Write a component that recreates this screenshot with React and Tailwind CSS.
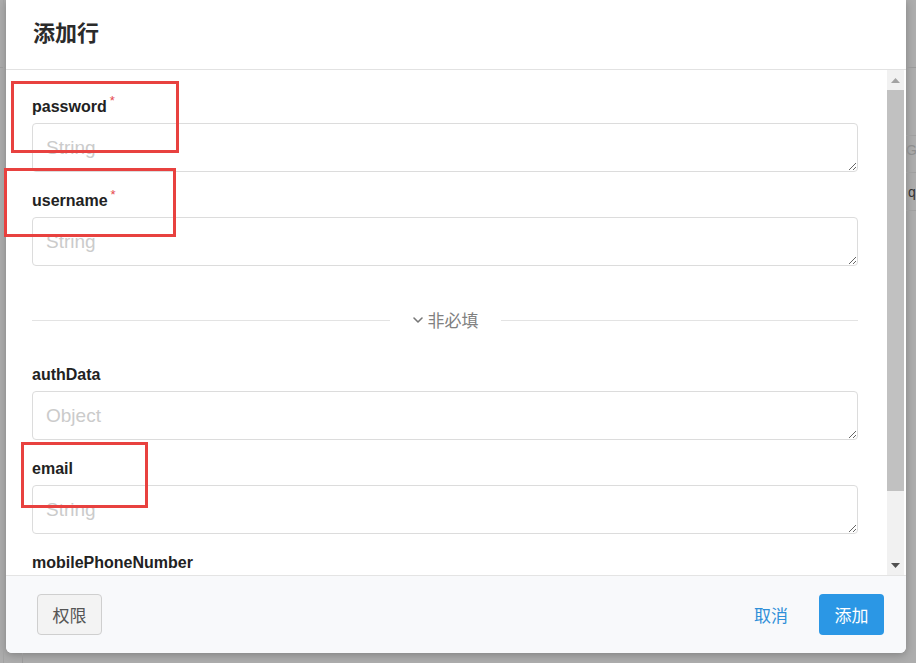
import React from "react";

const latin = { fontFamily: '"Liberation Sans", "Noto Sans CJK SC", Arial, sans-serif' };
const cjk = { fontFamily: '"Noto Sans CJK SC", "Liberation Sans", sans-serif' };

function Field({ label, required, placeholder }) {
  return (
    <div className="mb-[19px]">
      <div className="flex h-[20px] items-center text-[16px] font-bold leading-[20px] text-[#222]" style={latin}>
        <span>{label}</span>
        {required && <span className="relative -top-[6px] ml-[3px] text-[13px] font-normal text-[#e5484d]">*</span>}
      </div>
      <textarea
        placeholder={placeholder}
        className="mt-[6px] block h-[49px] w-full rounded-[4px] border border-[#dcdcdc] bg-white px-[13px] pt-[12px] text-[19px] leading-[24px] text-[#333] outline-none placeholder:text-[#cbcbcb]"
        style={latin}
      />
    </div>
  );
}

export default function App() {
  return (
    <div className="relative h-[663px] w-[916px] overflow-hidden bg-[#adadad]">
      {/* faint background page details */}
      <div className="absolute left-0 top-[67px] h-px w-[6px] bg-[#9a9a9a]" />
      <div className="absolute left-[3px] top-0 h-full w-px bg-[#a2a2a2]" />
      <div className="absolute right-0 top-[67px] h-px w-[10px] bg-[#9a9a9a]" />
      <div className="absolute right-0 top-[135px] h-px w-[10px] bg-[#a0a0a0]" />
      <div className="absolute right-0 top-[172px] h-px w-[10px] bg-[#a0a0a0]" />
      <div className="absolute right-0 top-[210px] h-px w-[10px] bg-[#a0a0a0]" />
      <div className="absolute left-[906px] top-[140px] w-[10px] overflow-hidden text-[14px] text-[#8e8e8e]" style={latin}>G</div>
      <div className="absolute left-[908px] top-[182px] w-[8px] overflow-hidden text-[14px] text-[#333]" style={latin}>q</div>
      <div className="absolute bottom-0 left-[22px] h-[10px] w-px bg-[#9a9a9a]" />

      <div className="ml-[6px] flex h-[653px] w-[900px] flex-col overflow-hidden rounded-b-[6px] bg-white shadow-[0_2px_8px_rgba(0,0,0,0.25)]">
        {/* header */}
        <div className="flex h-[70px] shrink-0 items-center border-b border-[#e2e2e2] pb-[6px] pl-[27px]">
          <h1 className="text-[22px] font-bold text-[#2b2b2b]" style={cjk}>添加行</h1>
        </div>

        {/* body */}
        <div className="flex h-[505px] shrink-0">
          <div className="flex-1 overflow-hidden pl-[26px] pr-[29px] pt-[27px]">
            <Field label="password" required placeholder="String" />
            <Field label="username" required placeholder="String" />

            <div className="mb-[35px] mt-[44px] flex h-[20px] items-center">
              <div className="h-px flex-1 bg-[#e3e3e3]" />
              <div className="flex items-center px-[22px] text-[17px] text-[#808080]" style={cjk}>
                <svg width="12" height="12" viewBox="0 0 12 12" className="mr-[4px]">
                  <path d="M2 4l4 4 4-4" fill="none" stroke="#777" strokeWidth="1.6" strokeLinecap="round" strokeLinejoin="round" />
                </svg>
                <span>非必填</span>
              </div>
              <div className="h-px flex-1 bg-[#e3e3e3]" />
            </div>

            <Field label="authData" placeholder="Object" />
            <Field label="email" placeholder="String" />
            <Field label="mobilePhoneNumber" placeholder="String" />
          </div>

          {/* scrollbar */}
          <div className="mr-[2px] flex w-[17px] flex-col bg-[#f1f1f1]">
            <div className="flex h-[20px] items-center justify-center">
              <svg width="9" height="5" viewBox="0 0 9 5"><path d="M0 5L4.5 0L9 5Z" fill="#a3a3a3" /></svg>
            </div>
            <div className="h-[401px] bg-[#c1c1c1]" />
            <div className="flex-1" />
            <div className="flex h-[20px] items-center justify-center">
              <svg width="9" height="5" viewBox="0 0 9 5"><path d="M0 0L4.5 5L9 0Z" fill="#505050" /></svg>
            </div>
          </div>
        </div>

        {/* footer */}
        <div className="flex flex-1 items-start justify-between border-t border-[#e4e4e4] bg-[#f8f9fb] pl-[31px] pr-[22px] pt-[18px]">
          <button className="h-[41px] w-[65px] rounded-[4px] border border-[#cfcfcf] bg-[#f3f3f3] text-[17px] text-[#555]" style={cjk}>权限</button>
          <div className="flex items-center gap-[15px]">
            <button className="h-[41px] px-[16px] text-[17px] text-[#2f8fd8]" style={cjk}>取消</button>
            <button className="h-[41px] w-[65px] rounded-[4px] bg-[#2b97e5] text-[17px] text-white" style={cjk}>添加</button>
          </div>
        </div>
      </div>

      {/* red annotation boxes */}
      <div className="pointer-events-none absolute left-[11px] top-[81px] h-[72px] w-[168px] border-[3px] border-[#e8413f]" />
      <div className="pointer-events-none absolute left-[4px] top-[168px] h-[69px] w-[172px] border-[3px] border-[#e8413f]" />
      <div className="pointer-events-none absolute left-[21px] top-[442px] h-[66px] w-[127px] border-[3px] border-[#e8413f]" />
    </div>
  );
}
